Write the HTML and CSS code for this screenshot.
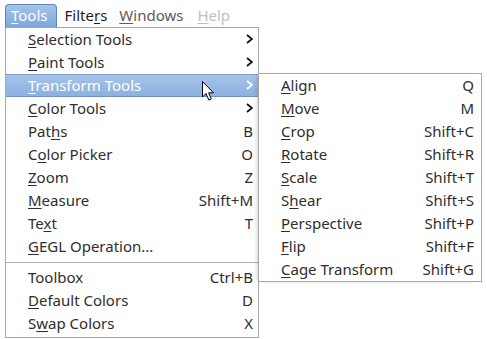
FILE: index.html
```html
<!DOCTYPE html>
<html>
<head>
<meta charset="utf-8">
<link rel="stylesheet" href="styles.css">
</head>
<body>
<div class="menubar">
  <div class="mb-item active"><u>T</u>ools</div>
  <div class="mb-item">Filte<u>r</u>s</div>
  <div class="mb-item dim"><u>W</u>indows</div>
  <div class="mb-item off"><u>H</u>elp</div>
</div>
<div class="menu main">
  <div class="row"><span class="label"><u>S</u>election Tools</span><svg class="chev" width="7" height="10" viewBox="0 0 7 10"><polyline points="1,1 6,5 1,9"/></svg></div>
  <div class="row"><span class="label"><u>P</u>aint Tools</span><svg class="chev" width="7" height="10" viewBox="0 0 7 10"><polyline points="1,1 6,5 1,9"/></svg></div>
  <div class="row hl"><span class="label"><u>T</u>ransform Tools</span><svg class="chev" width="7" height="10" viewBox="0 0 7 10"><polyline points="1,1 6,5 1,9"/></svg></div>
  <div class="row"><span class="label"><u>C</u>olor Tools</span><svg class="chev" width="7" height="10" viewBox="0 0 7 10"><polyline points="1,1 6,5 1,9"/></svg></div>
  <div class="row"><span class="label">Pat<u>h</u>s</span><span class="key">B</span></div>
  <div class="row"><span class="label">C<u>o</u>lor Picker</span><span class="key">O</span></div>
  <div class="row"><span class="label"><u>Z</u>oom</span><span class="key">Z</span></div>
  <div class="row"><span class="label"><u>M</u>easure</span><span class="key">Shift+M</span></div>
  <div class="row"><span class="label">Te<u>x</u>t</span><span class="key">T</span></div>
  <div class="row"><span class="label"><u>G</u>EGL Operation...</span></div>
  <div class="sep"></div>
  <div class="row"><span class="label">Toolbox</span><span class="key">Ctrl+B</span></div>
  <div class="row"><span class="label"><u>D</u>efault Colors</span><span class="key">D</span></div>
  <div class="row"><span class="label">S<u>w</u>ap Colors</span><span class="key">X</span></div>
</div>
<div class="menu sub">
  <div class="row"><span class="label"><u>A</u>lign</span><span class="key">Q</span></div>
  <div class="row"><span class="label"><u>M</u>ove</span><span class="key">M</span></div>
  <div class="row"><span class="label"><u>C</u>rop</span><span class="key">Shift+C</span></div>
  <div class="row"><span class="label"><u>R</u>otate</span><span class="key">Shift+R</span></div>
  <div class="row"><span class="label"><u>S</u>cale</span><span class="key">Shift+T</span></div>
  <div class="row"><span class="label">S<u>h</u>ear</span><span class="key">Shift+S</span></div>
  <div class="row"><span class="label"><u>P</u>erspective</span><span class="key">Shift+P</span></div>
  <div class="row"><span class="label"><u>F</u>lip</span><span class="key">Shift+F</span></div>
  <div class="row"><span class="label"><u>C</u>age Transform</span><span class="key">Shift+G</span></div>
</div>
<svg class="cursor" width="14" height="21" viewBox="0 0 14 21"><path d="M0.5,0.5 L0.5,16 L4,12.5 L6.8,19 L9.3,18 L6.6,11.8 L11.5,11.8 Z"/></svg>
</body>
</html>
```
FILE: styles.css
```css
html, body {
  margin: 0;
  padding: 0;
  background: #ffffff;
}
body {
  font-family: "Noto Sans", "DejaVu Sans", sans-serif;
  font-size: 15px;
  color: #2e2e2e;
  width: 487px;
  height: 339px;
  position: relative;
  overflow: hidden;
}
u {
  text-decoration: underline;
  text-underline-offset: 2px;
  text-decoration-thickness: 1px;
}
.menubar {
  display: flex;
  height: 27px;
  padding: 0 0 0 5px;
  align-items: flex-end;
}
.mb-item {
  height: 22px;
  line-height: 21px;
  padding: 0 6px;
  color: #1e1e1e;
}
.mb-item.active {
  background: linear-gradient(#a7c3e8, #7ea6dc);
  border: 1px solid #5a86c3;
  border-bottom: none;
  border-radius: 4px 4px 0 0;
  color: #ffffff;
  padding: 0 8px 0 5px;
  margin-right: 2px;
}
.mb-item.dim { color: #5b5b5b; }
.mb-item.off { color: #c0c0c0; margin-left: 2px; }
.menu {
  background: #ffffff;
  border: 1px solid #a8a8a8;
}
.main {
  margin-left: 5px;
  width: 252px;
  padding-bottom: 2px;
}
.row {
  height: 22px;
  padding-bottom: 1px;
  display: flex;
  align-items: center;
  justify-content: space-between;
  padding-left: 22px;
  padding-right: 5px;
  white-space: nowrap;
}
.row.hl {
  background: linear-gradient(#a7c3e8, #8cb0e0);
  border-top: 1px solid #7a9dd0;
  border-bottom: 1px solid #6e93c9;
  height: 20px;
  color: #ffffff;
}
.chev {
  fill: none;
  stroke: #111111;
  stroke-width: 1.8;
}
.hl .chev { stroke: #ffffff; }
.sep {
  height: 8px;
  display: flex;
  align-items: center;
}
.sep::after {
  content: "";
  display: block;
  width: 100%;
  border-top: 1px solid #b0b0b0;
}
.sub {
  position: absolute;
  left: 258px;
  top: 73px;
  width: 222px;
  box-shadow: -3px 1px 4px -2px rgba(0,0,0,0.18);
}
.sub .row {
  padding-right: 7px;
}
.cursor {
  position: absolute;
  left: 202px;
  top: 81px;
  fill: #ffffff;
  stroke: #000000;
  stroke-width: 1;
  stroke-linejoin: round;
}
```
